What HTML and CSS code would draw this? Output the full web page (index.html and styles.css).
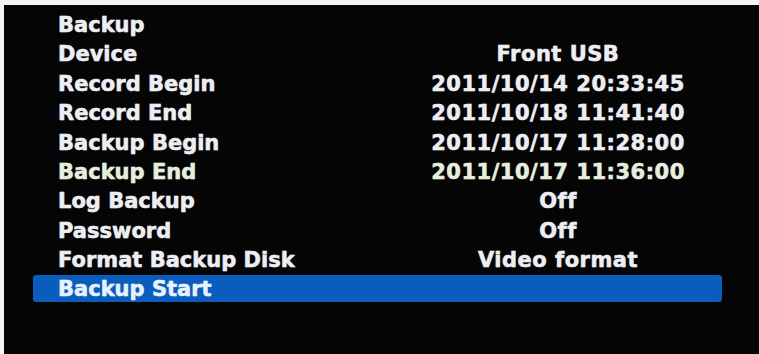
FILE: index.html
```html
<!DOCTYPE html>
<html>

<head>
    <meta charset="utf-8">
    <title>Backup</title>
    <meta name="viewport" content="width=device-width, initial-scale=1">
    <link rel="stylesheet" href="styles.css">
</head>

<body>
    <div class="screen">
        <ul class="menu">
            <li class="row title"><span class="label">Backup</span></li>
            <li class="row"><span class="label">Device</span><span class="value">Front USB</span></li>
            <li class="row"><span class="label">Record Begin</span><span class="value">2011/10/14 20:33:45</span></li>
            <li class="row"><span class="label">Record End</span><span class="value">2011/10/18 11:41:40</span></li>
            <li class="row"><span class="label">Backup Begin</span><span class="value">2011/10/17 11:28:00</span></li>
            <li class="row green"><span class="label">Backup End</span><span class="value">2011/10/17 11:36:00</span></li>
            <li class="row"><span class="label">Log Backup</span><span class="value">Off</span></li>
            <li class="row"><span class="label">Password</span><span class="value">Off</span></li>
            <li class="row"><span class="label">Format Backup Disk</span><span class="value">Video format</span></li>
            <li class="row selected"><span class="label">Backup Start</span></li>
        </ul>
    </div>
</body>

</html>
```

FILE: styles.css
```css
body {
    margin: 0;
    background-color: #f4f4f4;
}

.screen {
    margin: 5px 0 0 4px;
    height: 349px;
    background-color: #050506;
    padding-top: 6px;
    box-sizing: border-box;
}

.menu {
    margin: 0;
    padding: 0;
    list-style: none;
    font-family: "DejaVu Sans", Verdana, sans-serif;
    font-weight: bold;
    font-size: 21px;
    color: #eceef2;
    -webkit-text-stroke: 0.4px currentColor;
    text-shadow: 0 0 1px rgba(230, 235, 255, 0.6);
}

.row {
    display: grid;
    grid-template-columns: 300px 400px;
    line-height: 29.4px;
    padding-left: 54px;
    white-space: nowrap;
}

.row .value {
    text-align: center;
    letter-spacing: 0.5px;
}

.green {
    color: #e4efdc;
}

.selected {
    margin-left: 29px;
    margin-top: -1px;
    width: 689px;
    box-sizing: border-box;
    padding-left: 25px;
    padding-top: 2px;
    line-height: 25px;
    background-color: #0a5cbd;
    border-radius: 3px;
    color: #e6f2ff;
}
```
